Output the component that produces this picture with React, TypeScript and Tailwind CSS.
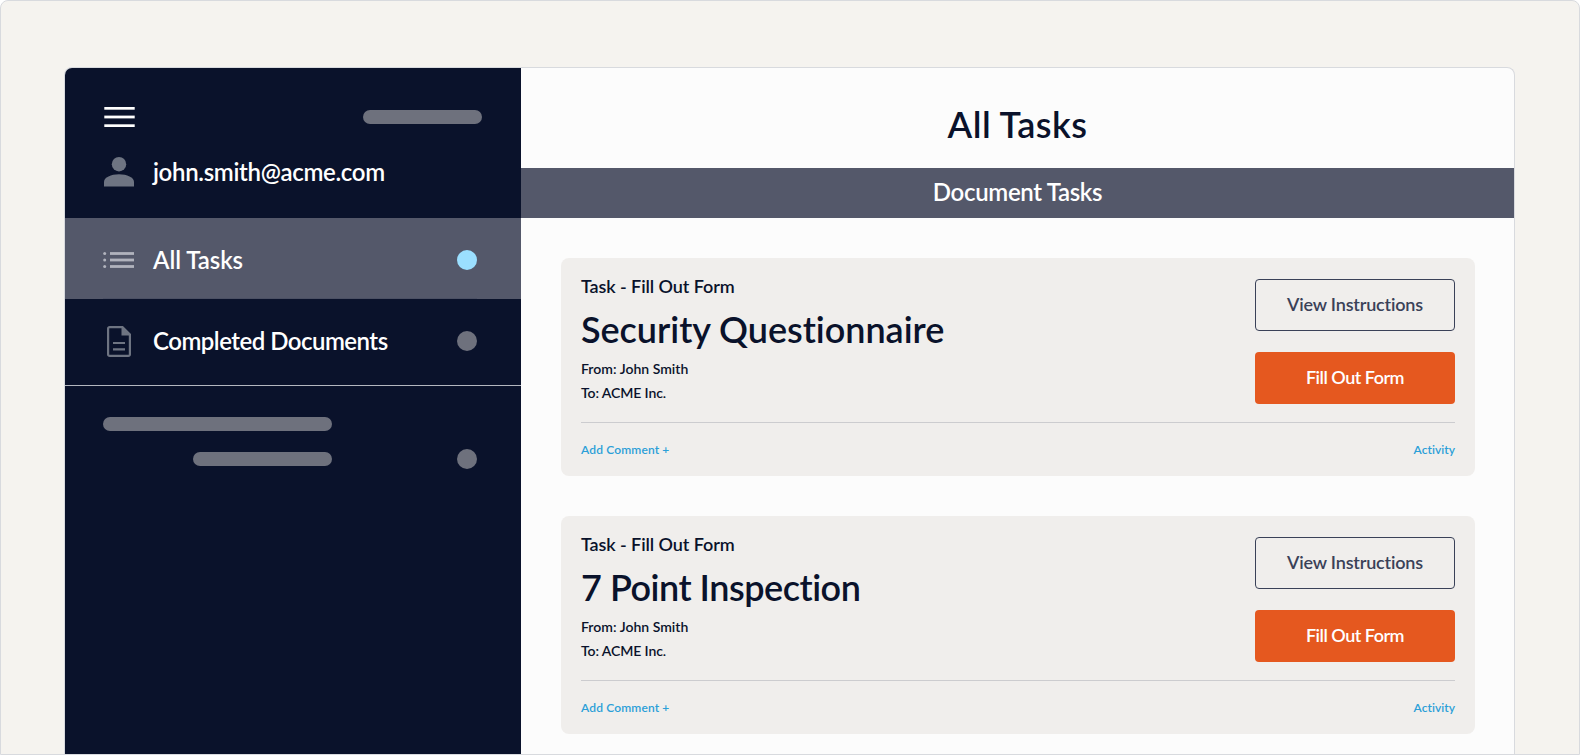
import React from 'react';

const tasks = [
  { title: 'Security Questionnaire', tracking: 'tracking-[-0.03px]' },
  { title: '7 Point Inspection', tracking: 'tracking-[-0.48px]' },
];

function Dot({ active = false }: { active?: boolean }) {
  return <span className={`ml-auto size-5 rounded-full ${active ? 'bg-[#9bdfff]' : 'bg-[#6e717d]'}`} />;
}

function MenuIcon() {
  return (
    <svg width="31" height="20" viewBox="0 0 31 20" fill="#fff">
      <rect x="0.3" y="0" width="30.4" height="2.7" />
      <rect x="0.3" y="8.6" width="30.4" height="2.8" />
      <rect x="0.3" y="17.3" width="30.4" height="2.7" />
    </svg>
  );
}

function UserIcon() {
  return (
    <svg width="30" height="30" viewBox="0 0 30 30" fill="#6e7482">
      <circle cx="15" cy="7.2" r="7.2" />
      <path d="M0 29.5V25c0-4.5 7-7.7 15-7.7S30 20.5 30 25v4.5z" />
    </svg>
  );
}

function ListIcon() {
  return (
    <svg width="31" height="16" viewBox="0 0 31 16" fill="#b1b3bd">
      {[1.5, 8, 14.5].map((y) => (
        <g key={y}>
          <circle cx="1.7" cy={y} r="1.5" />
          <rect x="7" y={y - 1.4} width="24" height="2.8" />
        </g>
      ))}
    </svg>
  );
}

function DocumentIcon() {
  return (
    <svg width="24" height="31" viewBox="0 0 24 31" fill="none" stroke="#6e7482" strokeWidth="2.2">
      <path d="M15.5 1.1H2.6A1.5 1.5 0 0 0 1.1 2.600v25.8A1.5 1.5 0 0 0 2.600 29.900h18.8a1.5 1.5 0 0 0 1.500-1.500V8.500z" />
      <path d="M14.5 0.5v9h9z" fill="#6e7482" stroke="none" />
      <path d="M6 17h12M6 23.3h12" />
    </svg>
  );
}

function Sidebar() {
  return (
    <aside className="w-[456px] shrink-0 bg-[#0a122b] text-2xl leading-[29px] text-white">
      <div className="h-[150px] px-[39px] pt-[39px]">
        <div className="flex h-5 items-center justify-between">
          <MenuIcon />
          <span className="h-3.5 w-[119px] rounded-full bg-[#6e717d]" />
        </div>
        <div className="mt-[29px] flex h-[31px] items-center">
          <UserIcon />
          <span className="ml-[19px] tracking-[-0.32px]">john.smith@acme.com</span>
        </div>
      </div>
      <div className="bg-[#54586a] pr-11 pl-[38px]">
        <div className="flex h-[81px] items-center border-b border-[#4b5064] pt-1">
          <ListIcon />
          <span className="ml-[19px] pb-px tracking-[-0.05px]">All Tasks</span>
          <Dot active />
        </div>
      </div>
      <div className="flex h-[86px] items-center pr-11 pb-[2px] pl-[42px]">
        <DocumentIcon />
        <span className="ml-[22px] pb-px tracking-[-0.51px]">Completed Documents</span>
        <Dot />
      </div>
      <div className="border-t border-[#b4b7bf] pt-[31px] pr-11 pl-[38px]">
        <div className="h-3.5 w-[229px] rounded-full bg-[#6e717d]" />
        <div className="mt-[18px] flex items-center pl-[90px]">
          <span className="h-3.5 w-[139px] rounded-full bg-[#6e717d]" />
          <Dot />
        </div>
      </div>
    </aside>
  );
}

function TaskCard({ title, tracking }: { title: string; tracking: string }) {
  return (
    <article className="h-[218px] rounded-lg bg-[#f0eeec] px-5 pt-5">
      <div className="flex h-[144px] justify-between">
        <div>
          <p className="text-lg leading-4 tracking-[-0.08px]">Task - Fill Out Form</p>
          <h2 className={`mt-[13px] text-4xl leading-[44px] ${tracking}`}>{title}</h2>
          <div className="mt-1.5 text-sm leading-6">
            <p className="tracking-[0.02px]">From: John Smith</p>
            <p className="tracking-[-0.1px]">To: ACME Inc.</p>
          </div>
        </div>
        <div className="flex w-[200px] flex-col gap-[21px] pt-px text-lg">
          <button className="h-[52px] rounded border border-[#3a4158] pb-[3px] tracking-[-0.18px] text-[#3a4158]">
            View Instructions
          </button>
          <button className="h-[52px] rounded bg-[#e5581f] pb-[3px] tracking-[-0.5px] text-white">
            Fill Out Form
          </button>
        </div>
      </div>
      <div className="flex justify-between border-t border-[#cccccf] pt-[19px] text-xs leading-4 text-[#2b9fd8]">
        <span className="tracking-[0.14px]">Add Comment +</span>
        <span className="tracking-[0.05px]">Activity</span>
      </div>
    </article>
  );
}

export default function App() {
  return (
    <div className="h-[756px] bg-white font-['Lato',sans-serif] font-semibold [font-variant-ligatures:none]">
      <div className="h-[755px] overflow-hidden rounded-t-lg border border-[#d8dade] bg-[#f5f3ef] pt-[66px] pr-16 pl-[63px]">
        <div className="flex h-full overflow-hidden rounded-t-lg border border-b-0 border-[#d8dade] bg-[#fcfcfc]">
          <Sidebar />
          <main className="flex-1 text-[#0a122b]">
            <h1 className="h-[100px] pt-[34px] text-center text-4xl leading-[44px] tracking-[0.45px]">All Tasks</h1>
            <div className="h-[50px] bg-[#54586a] pt-[9px] text-center text-2xl leading-[29px] tracking-[-0.33px] text-white">
              Document Tasks
            </div>
            <div className="flex flex-col gap-10 pt-10 pr-[39px] pl-10">
              {tasks.map((task) => (
                <TaskCard key={task.title} {...task} />
              ))}
            </div>
          </main>
        </div>
      </div>
    </div>
  );
}
